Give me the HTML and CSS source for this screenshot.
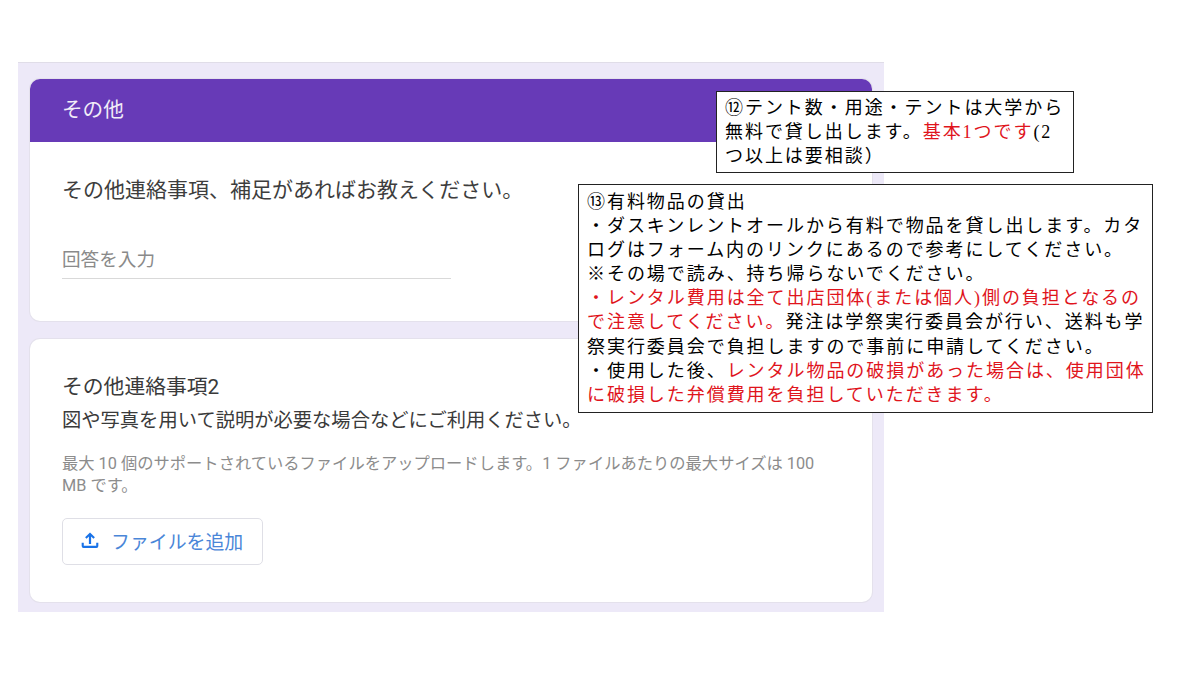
FILE: index.html
```html
<!DOCTYPE html>
<html lang="ja">
<head>
<meta charset="utf-8">
<title>その他</title>
<link rel="stylesheet" href="styles.css">
</head>
<body>
<main class="panel">
  <section class="card">
    <header class="card-head">その他</header>
    <div class="card-body first-body">
      <p class="question">その他連絡事項、補足があればお教えください。</p>
      <div class="answer">回答を入力</div>
    </div>
  </section>
  <section class="card second">
    <h2 class="title">その他連絡事項2</h2>
    <p class="desc">図や写真を用いて説明が必要な場合などにご利用ください。</p>
    <p class="note">最大 10 個のサポートされているファイルをアップロードします。1 ファイルあたりの最大サイズは 100 MB です。</p>
    <button class="add" type="button">
      <svg class="upload" viewBox="0 0 18 18" width="20" height="20" aria-hidden="true"><path d="M9 2.2 4.6 6.6 5.9 7.9 8 5.8V12.5H10V5.8L12.1 7.9 13.4 6.6Z"/><path d="M1.5 11.5H3.4V14.2H14.6V11.5H16.5V14.4A1.7 1.7 0 0 1 14.8 16.1H3.2A1.7 1.7 0 0 1 1.5 14.4Z"/></svg>
      <span>ファイルを追加</span>
    </button>
  </section>
</main>
<aside class="callout tent">
  <span class="ln">⑫テント数・用途・テントは大学から</span>
  <span class="ln">無料で貸し出します。<em>基本1つです</em>(2</span>
  <span class="ln">つ以上は要相談）</span>
</aside>
<aside class="callout rental">
  <span class="ln">⑬有料物品の貸出</span>
  <span class="ln">・ダスキンレントオールから有料で物品を貸し出します。カタ</span>
  <span class="ln">ログはフォーム内のリンクにあるので参考にしてください。</span>
  <span class="ln">※その場で読み、持ち帰らないでください。</span>
  <span class="ln"><em>・レンタル費用は全て出店団体(または個人)側の負担となるの</em></span>
  <span class="ln"><em>で注意してください。</em>発注は学祭実行委員会が行い、送料も学</span>
  <span class="ln">祭実行委員会で負担しますので事前に申請してください。</span>
  <span class="ln">・使用した後、<em>レンタル物品の破損があった場合は、使用団体</em></span>
  <span class="ln"><em>に破損した弁償費用を負担していただきます。</em></span>
</aside>
</body>
</html>
```
FILE: styles.css
```css
* { box-sizing: border-box; }
html, body { margin: 0; height: 675px; overflow: hidden; background: #fff; }
body {
  padding: 62px 0 0 18px;
  font-family: "Roboto", "Noto Sans CJK JP", sans-serif;
  color: #2f2f2f;
  position: relative;
}
.panel {
  width: 866px;
  height: 550px;
  padding: 16px 12px 10px;
  background: #ede9f8;
  border-top: 1px solid #e0dde8;
  display: flex;
  flex-direction: column;
  gap: 18px;
}
.card {
  background: #fff;
  border-radius: 10px;
  box-shadow: 0 0 0 1px #e4e1ec;
}
.card-head {
  height: 63px;
  padding: 0 32px 6px;
  display: flex;
  align-items: center;
  background: #673ab7;
  color: #f1ecf8;
  border-radius: 10px 10px 0 0;
  font-size: 20.6px;
}
.first-body { height: 179px; padding: 34px 32px 0; }
.question { margin: 0; font-size: 21px; line-height: 28px; color: #3d3d3d; }
.answer {
  width: 389px;
  height: 32px;
  margin-top: 43px;
  font-size: 18.6px;
  line-height: 27px;
  color: #8a8a8a;
  border-bottom: 1px solid #d9d9d9;
}
.second { height: 263px; padding: 34px 32px 0; }
.title { margin: 0; font-weight: 400; font-size: 20.8px; line-height: 28px; color: #3a3a3a; }
.desc { margin: 7px 0 0; font-size: 19.3px; line-height: 26px; color: #3a3a3a; }
.note { width: 770px; margin: 19px 0 0; font-size: 16.3px; line-height: 22px; color: #8c8c8c; }
.add {
  display: flex;
  align-items: center;
  gap: 11px;
  width: 201px;
  height: 47px;
  margin-top: 21px;
  padding: 0 0 3px 17px;
  background: #fff;
  border: 1px solid #dfdfe6;
  border-radius: 5px;
  font-family: inherit;
  font-size: 18.9px;
  color: #4a86d8;
}
.upload { fill: #1a73e8; flex: none; }
.callout {
  position: absolute;
  background: #fff;
  border: 1px solid #222;
  font-family: "Liberation Serif", "Noto Sans CJK JP", serif;
  font-size: 18px;
  letter-spacing: 1.95px;
  line-height: 24.1px;
  color: #000;
  white-space: nowrap;
}
.callout em { font-style: normal; color: #e0141c; }
.ln { display: block; }
.tent { left: 716px; top: 91px; width: 358px; height: 82px; padding: 4px 0 0 8px; }
.rental { left: 578px; top: 184px; width: 575px; height: 229px; padding: 5px 0 0 8px; }
```
